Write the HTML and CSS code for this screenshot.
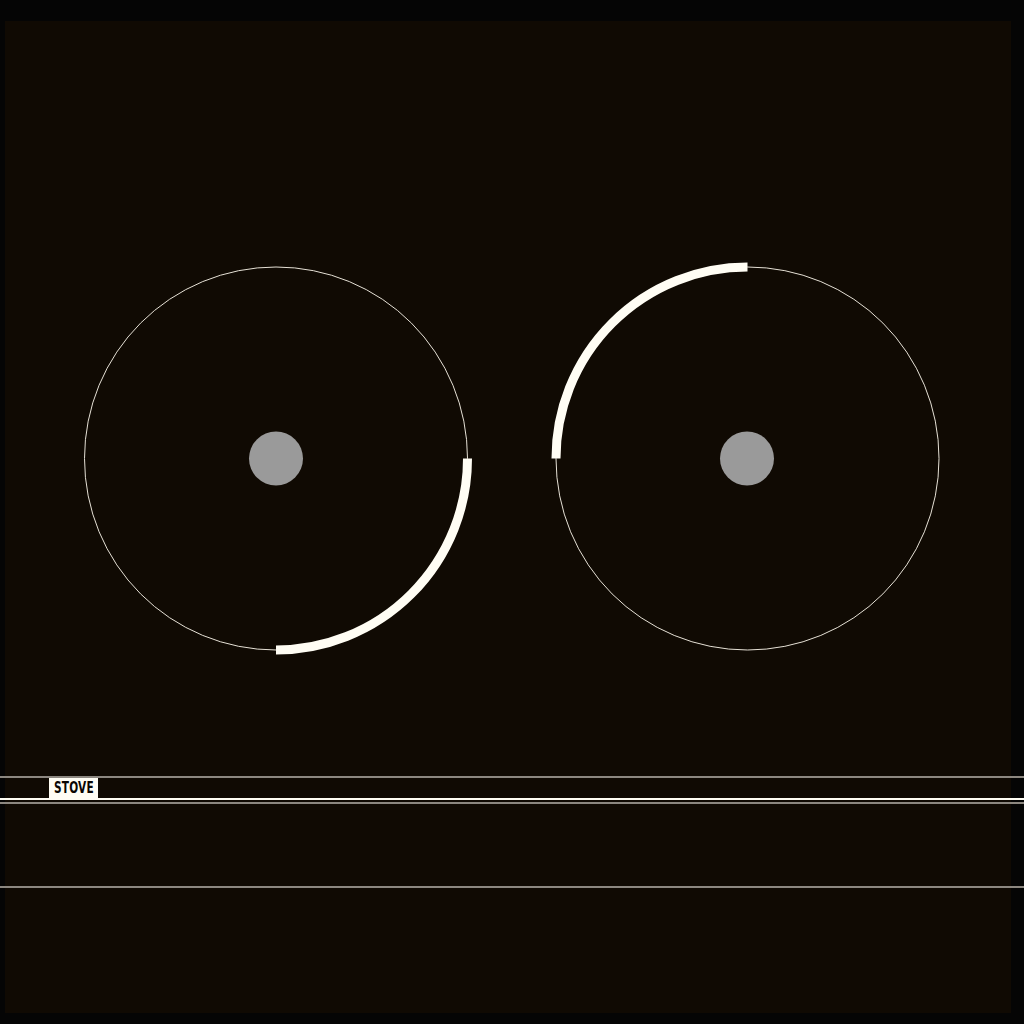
FILE: index.html
```html
<!DOCTYPE html>
<html lang="en">
<head>
<meta charset="utf-8">
<title>Stove</title>
<link rel="stylesheet" href="styles.css">
</head>
<body>
<div class="frame">
  <main class="panel">
    <svg class="hob" width="1006" height="740" viewBox="0 0 1006 740" aria-label="Stove burners">
      <g class="burner">
        <circle class="ring" cx="271" cy="437.5" r="191.5"/>
        <path class="level" d="M462.5 437.5 A191.5 191.5 0 0 1 271 629"/>
        <circle class="knob" cx="271" cy="437.5" r="27"/>
      </g>
      <g class="burner">
        <circle class="ring" cx="742.5" cy="437.5" r="191.5"/>
        <path class="level" d="M551 437.5 A191.5 191.5 0 0 1 742.5 246"/>
        <circle class="knob" cx="742" cy="437.5" r="27"/>
      </g>
    </svg>
  </main>
</div>
<section class="strip">
  <div class="rule rule-grey"></div>
  <div class="label-row"><span class="label"><span class="label-text">STOVE</span></span></div>
  <div class="rule rule-white"></div>
  <div class="rule rule-grey rule-gap"></div>
  <div class="strip-body"></div>
  <div class="rule rule-grey"></div>
</section>
</body>
</html>
```
FILE: styles.css
```css
html, body {
  margin: 0;
  padding: 0;
}
body {
  background: #050505;
  width: 1024px;
  height: 1024px;
  overflow: hidden;
  position: relative;
  font-family: "DejaVu Sans Condensed", "DejaVu Sans", sans-serif;
}
.frame {
  padding: 21px 13px 11px 5px;
}
.panel {
  width: 1006px;
  height: 992px;
  background: #100a03;
}
.hob {
  display: block;
}
.ring {
  fill: none;
  stroke: #e6e1d6;
  stroke-width: 1;
}
.level {
  fill: none;
  stroke: #fffdf4;
  stroke-width: 9;
  stroke-linecap: butt;
}
.knob {
  fill: #9a9a9a;
}
.strip {
  position: absolute;
  left: 0;
  top: 776px;
  width: 1024px;
  display: flex;
  flex-direction: column;
}
.rule {
  height: 2px;
}
.rule-grey {
  background: #8c8780;
}
.rule-white {
  background: #fffdf4;
}
.rule-gap {
  margin-top: 2px;
}
.label-row {
  height: 20px;
  display: flex;
  align-items: stretch;
  padding-left: 49px;
}
.label {
  background: #fffdf4;
  color: #0a0603;
  width: 49px;
  box-sizing: border-box;
  padding-left: 5px;
  overflow: hidden;
  white-space: nowrap;
}
.label-text {
  display: inline-block;
  font-weight: bold;
  font-size: 15px;
  line-height: 20px;
  letter-spacing: 0.3px;
  transform: scaleX(0.78);
  transform-origin: left center;
}
.strip-body {
  height: 82px;
}
```
